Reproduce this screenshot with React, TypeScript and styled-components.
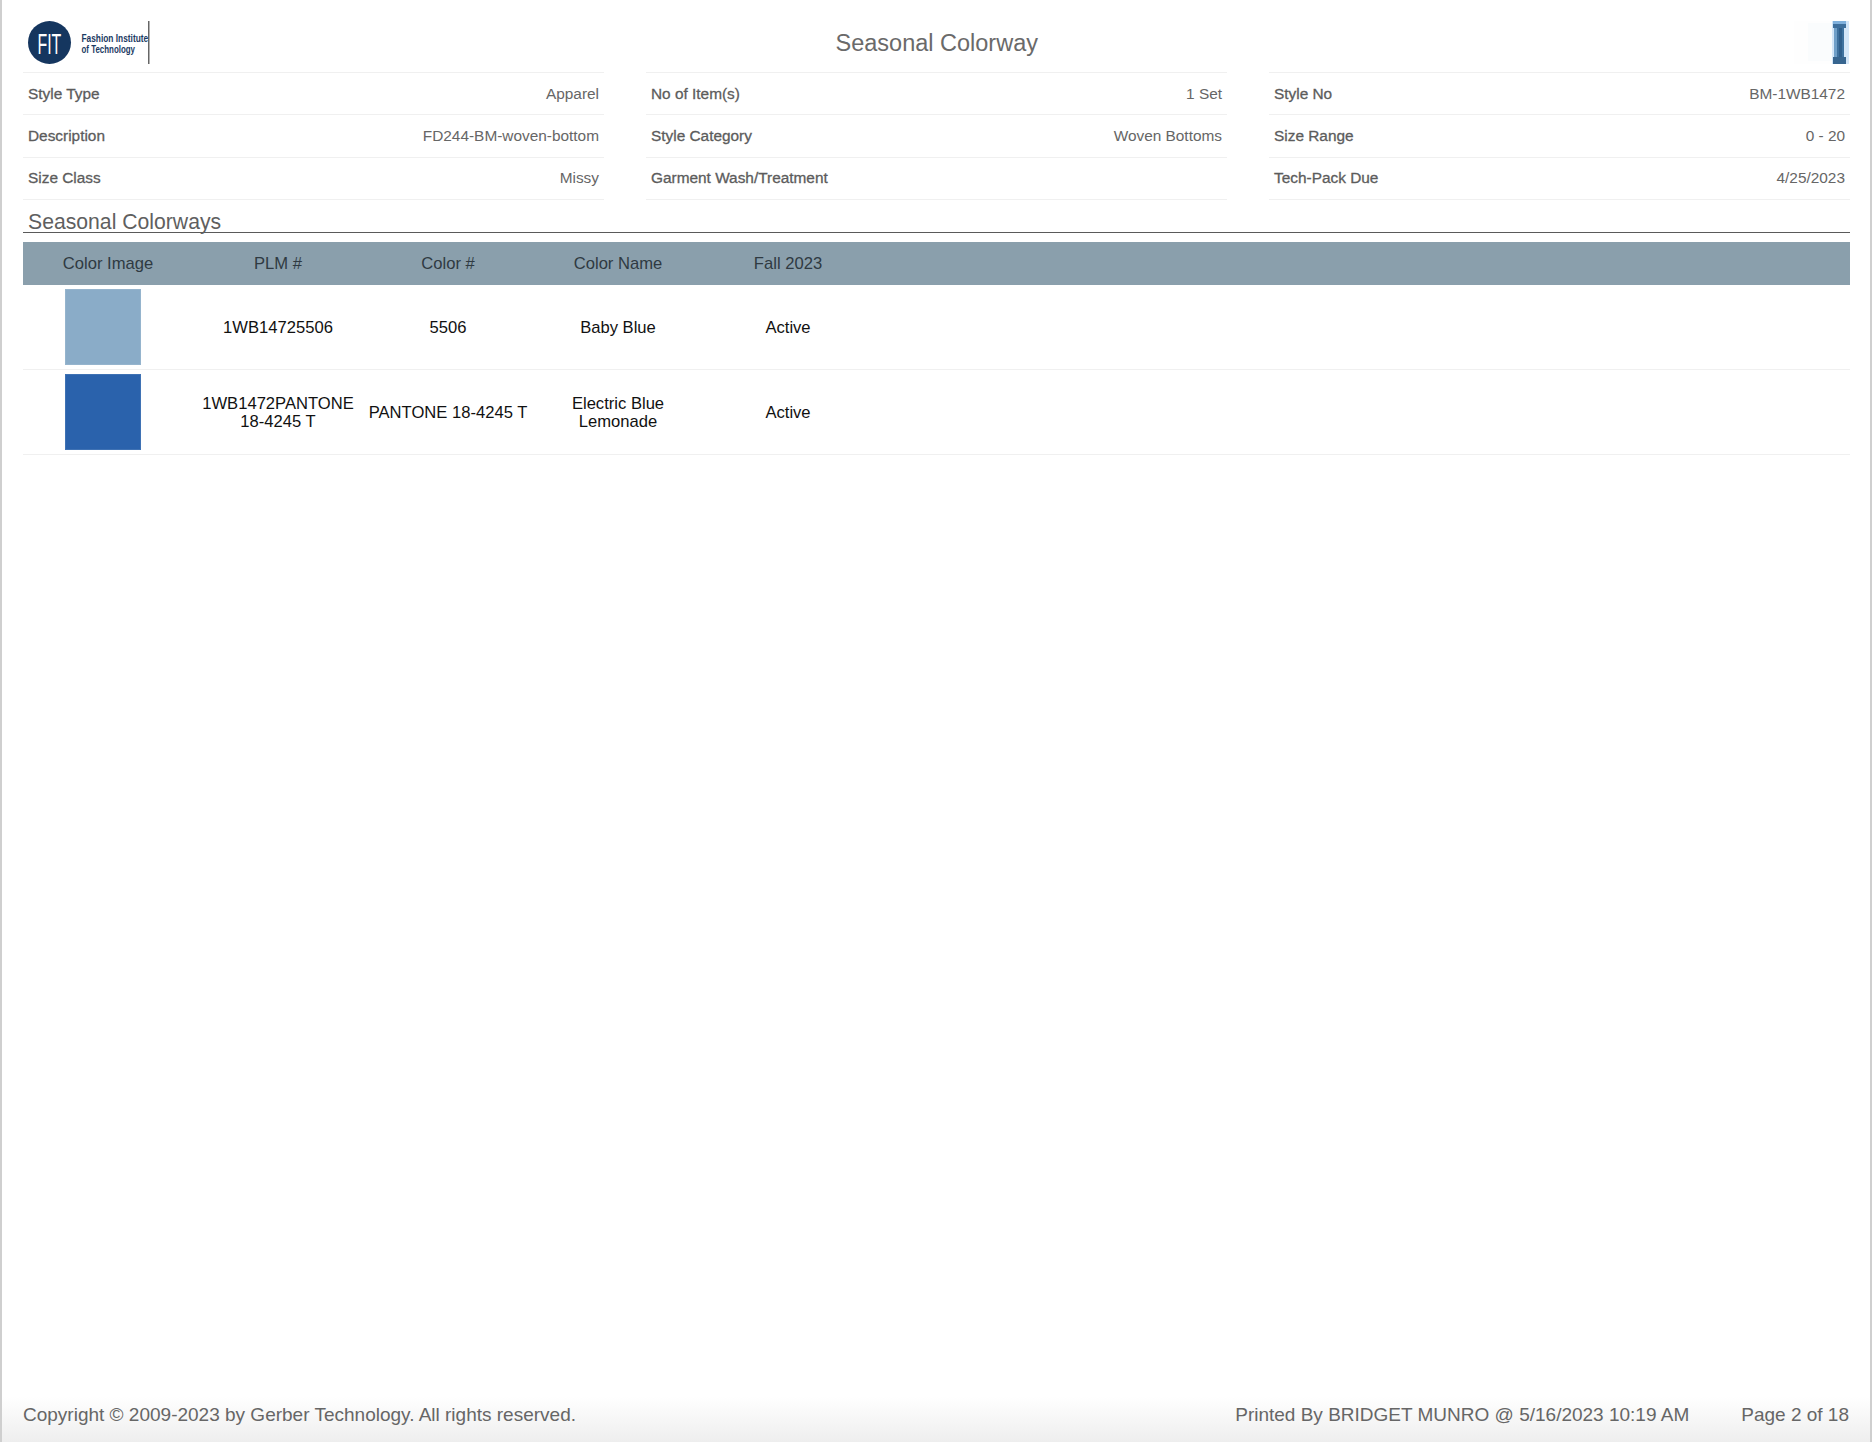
import React from "react";
import { createGlobalStyle, styled } from "styled-components";

const infoColumns = [
  [
    ["Style Type", "Apparel"],
    ["Description", "FD244-BM-woven-bottom"],
    ["Size Class", "Missy"],
  ],
  [
    ["No of Item(s)", "1 Set"],
    ["Style Category", "Woven Bottoms"],
    ["Garment Wash/Treatment", ""],
  ],
  [
    ["Style No", "BM-1WB1472"],
    ["Size Range", "0 - 20"],
    ["Tech-Pack Due", "4/25/2023"],
  ],
];

const colorways = [
  { swatch: "#8aacc8", plm: "1WB14725506", color: "5506", name: "Baby Blue", status: "Active" },
  {
    swatch: "#2a62ac",
    plm: "1WB1472PANTONE 18-4245 T",
    color: "PANTONE 18-4245 T",
    name: "Electric Blue Lemonade",
    status: "Active",
  },
];

function Logo() {
  return (
    <svg width="122" height="43" viewBox="0 0 122 43">
      <circle cx="21.5" cy="21.5" r="21.5" fill="#15365f" />
      <text transform="translate(9.5 32.5) scale(0.53 1)" fill="#fff" fontSize="30">
        FIT
      </text>
      <g fill="#1b3a63" fontSize="10.7" fontWeight="700">
        <text transform="translate(53.5 20.7) scale(0.78 1)">Fashion Institute</text>
        <text transform="translate(53.5 31.7) scale(0.74 1)">of Technology</text>
      </g>
      <rect x="120" y="0" width="1.5" height="43" fill="#666" />
    </svg>
  );
}

function StyleThumb() {
  return (
    <svg width="56" height="43" viewBox="0 0 56 43">
      <rect x="0" y="0" width="38" height="43" fill="#fefefe" />
      <rect x="14" y="2" width="24" height="38" fill="#fafcfd" />
      <rect x="38" y="0" width="17" height="43" fill="#d3e6f8" />
      <rect x="39" y="0" width="13" height="3" fill="#7fb0dc" />
      <rect x="39" y="3" width="13" height="4" fill="#3e6f9c" />
      <rect x="40" y="7" width="3" height="29" fill="#6f9fc8" />
      <rect x="43" y="7" width="7" height="29" fill="#3f729f" />
      <rect x="45" y="7" width="3" height="29" fill="#2f5f8c" />
      <rect x="39" y="36" width="13" height="7" fill="#37658f" />
    </svg>
  );
}

export default function App() {
  return (
    <Page>
      <GlobalStyle />
      <Top>
        <Logo />
        <Title>Seasonal Colorway</Title>
        <ThumbSlot>
          <StyleThumb />
        </ThumbSlot>
      </Top>
      <InfoGrid>
        {infoColumns.map((rows, i) => (
          <InfoColumn key={i}>
            {rows.map(([label, value]) => (
              <InfoRow key={label}>
                <InfoLabel>{label}</InfoLabel>
                <InfoValue>{value}</InfoValue>
              </InfoRow>
            ))}
          </InfoColumn>
        ))}
      </InfoGrid>
      <SectionTitle>Seasonal Colorways</SectionTitle>
      <TableHead>
        <HeadCell>Color Image</HeadCell>
        <HeadCell>PLM #</HeadCell>
        <HeadCell>Color #</HeadCell>
        <HeadCell>Color Name</HeadCell>
        <HeadCell>Fall 2023</HeadCell>
      </TableHead>
      {colorways.map((c) => (
        <TableRow key={c.plm}>
          <SwatchCell>
            <Swatch $color={c.swatch} />
          </SwatchCell>
          <Cell>{c.plm}</Cell>
          <Cell>{c.color}</Cell>
          <Cell>{c.name}</Cell>
          <Cell>{c.status}</Cell>
        </TableRow>
      ))}
      <Footer>
        <span>Copyright © 2009-2023 by Gerber Technology. All rights reserved.</span>
        <FooterRight>
          <span>Printed By BRIDGET MUNRO @ 5/16/2023 10:19 AM</span>
          <span>Page 2 of 18</span>
        </FooterRight>
      </Footer>
    </Page>
  );
}

const GlobalStyle = createGlobalStyle`
  body {
    margin: 0;
    background: #fff;
    font-family: "Liberation Sans", Arial, sans-serif;
  }
`;

const Page = styled.div`
  box-sizing: border-box;
  height: 1442px;
  display: flex;
  flex-direction: column;
  border-left: 2px solid #cfcfcf;
  border-right: 2px solid #cfcfcf;
  overflow: hidden;
`;

const Top = styled.header`
  height: 72px;
  box-sizing: border-box;
  padding: 21px 20px 8px 25.5px;
  display: grid;
  grid-template-columns: 1fr auto 1fr;
  align-items: start;
`;

const Title = styled.h1`
  margin: 1px 4px 0 0;
  font-size: 23.5px;
  font-weight: 400;
  line-height: 43px;
  color: #6a6a6a;
`;

const ThumbSlot = styled.div`
  display: flex;
  justify-content: flex-end;
`;

const InfoGrid = styled.section`
  margin: 0 20px 0 21px;
  display: grid;
  grid-template-columns: repeat(3, 581px);
  justify-content: space-between;
`;

const InfoColumn = styled.div`
  display: flex;
  flex-direction: column;
  border-top: 1px solid #f0f0f0;
`;

const InfoRow = styled.div`
  height: 42.3px;
  box-sizing: border-box;
  padding: 0 5px;
  display: flex;
  justify-content: space-between;
  align-items: center;
  border-bottom: 1px solid #f0f0f0;
  font-size: 15.4px;
`;

const InfoLabel = styled.span`
  color: #5c5c5c;
  -webkit-text-stroke: 0.3px #5c5c5c;
`;

const InfoValue = styled.span`
  color: #666;
`;

const SectionTitle = styled.h2`
  margin: 0 20px 0 21px;
  height: 33.5px;
  box-sizing: border-box;
  padding: 10px 5px 0;
  border-bottom: 1px solid #5a5a5a;
  font-size: 21.2px;
  line-height: 24px;
  font-weight: 400;
  color: #5f5f5f;
`;

const TableHead = styled.div`
  margin: 8.5px 20px 0 21px;
  height: 43px;
  display: grid;
  grid-template-columns: repeat(5, 170px) 1fr;
  align-items: center;
  background: #8a9fac;
`;

const HeadCell = styled.div`
  padding-top: 2px;
  text-align: center;
  font-size: 16.6px;
  color: #2f3a42;
`;

const TableRow = styled.div`
  margin: 0 20px 0 21px;
  height: 85px;
  box-sizing: border-box;
  display: grid;
  grid-template-columns: repeat(5, 170px) 1fr;
  align-items: center;
  border-bottom: 1px solid #f0f0f0;
`;

const SwatchCell = styled.div`
  padding-left: 42px;
  display: flex;
`;

const Swatch = styled.div<{ $color: string }>`
  width: 76px;
  height: 76px;
  background: ${({ $color }) => $color};
  box-shadow: inset 0 0 0 1px rgba(255, 255, 255, 0.1);
`;

const Cell = styled.div`
  padding: 2px 4px 0;
  text-align: center;
  font-size: 16.6px;
  line-height: 18px;
  color: #111;
`;

const Footer = styled.footer`
  margin-top: auto;
  height: 57px;
  box-sizing: border-box;
  padding: 18px 21px 0 21px;
  display: flex;
  justify-content: space-between;
  align-items: flex-start;
  background: linear-gradient(to bottom, #fff, #fff 20%, #eeeeee);
  font-size: 19px;
  line-height: 24px;
  color: #666;
`;

const FooterRight = styled.div`
  display: flex;
  gap: 52px;
`;
